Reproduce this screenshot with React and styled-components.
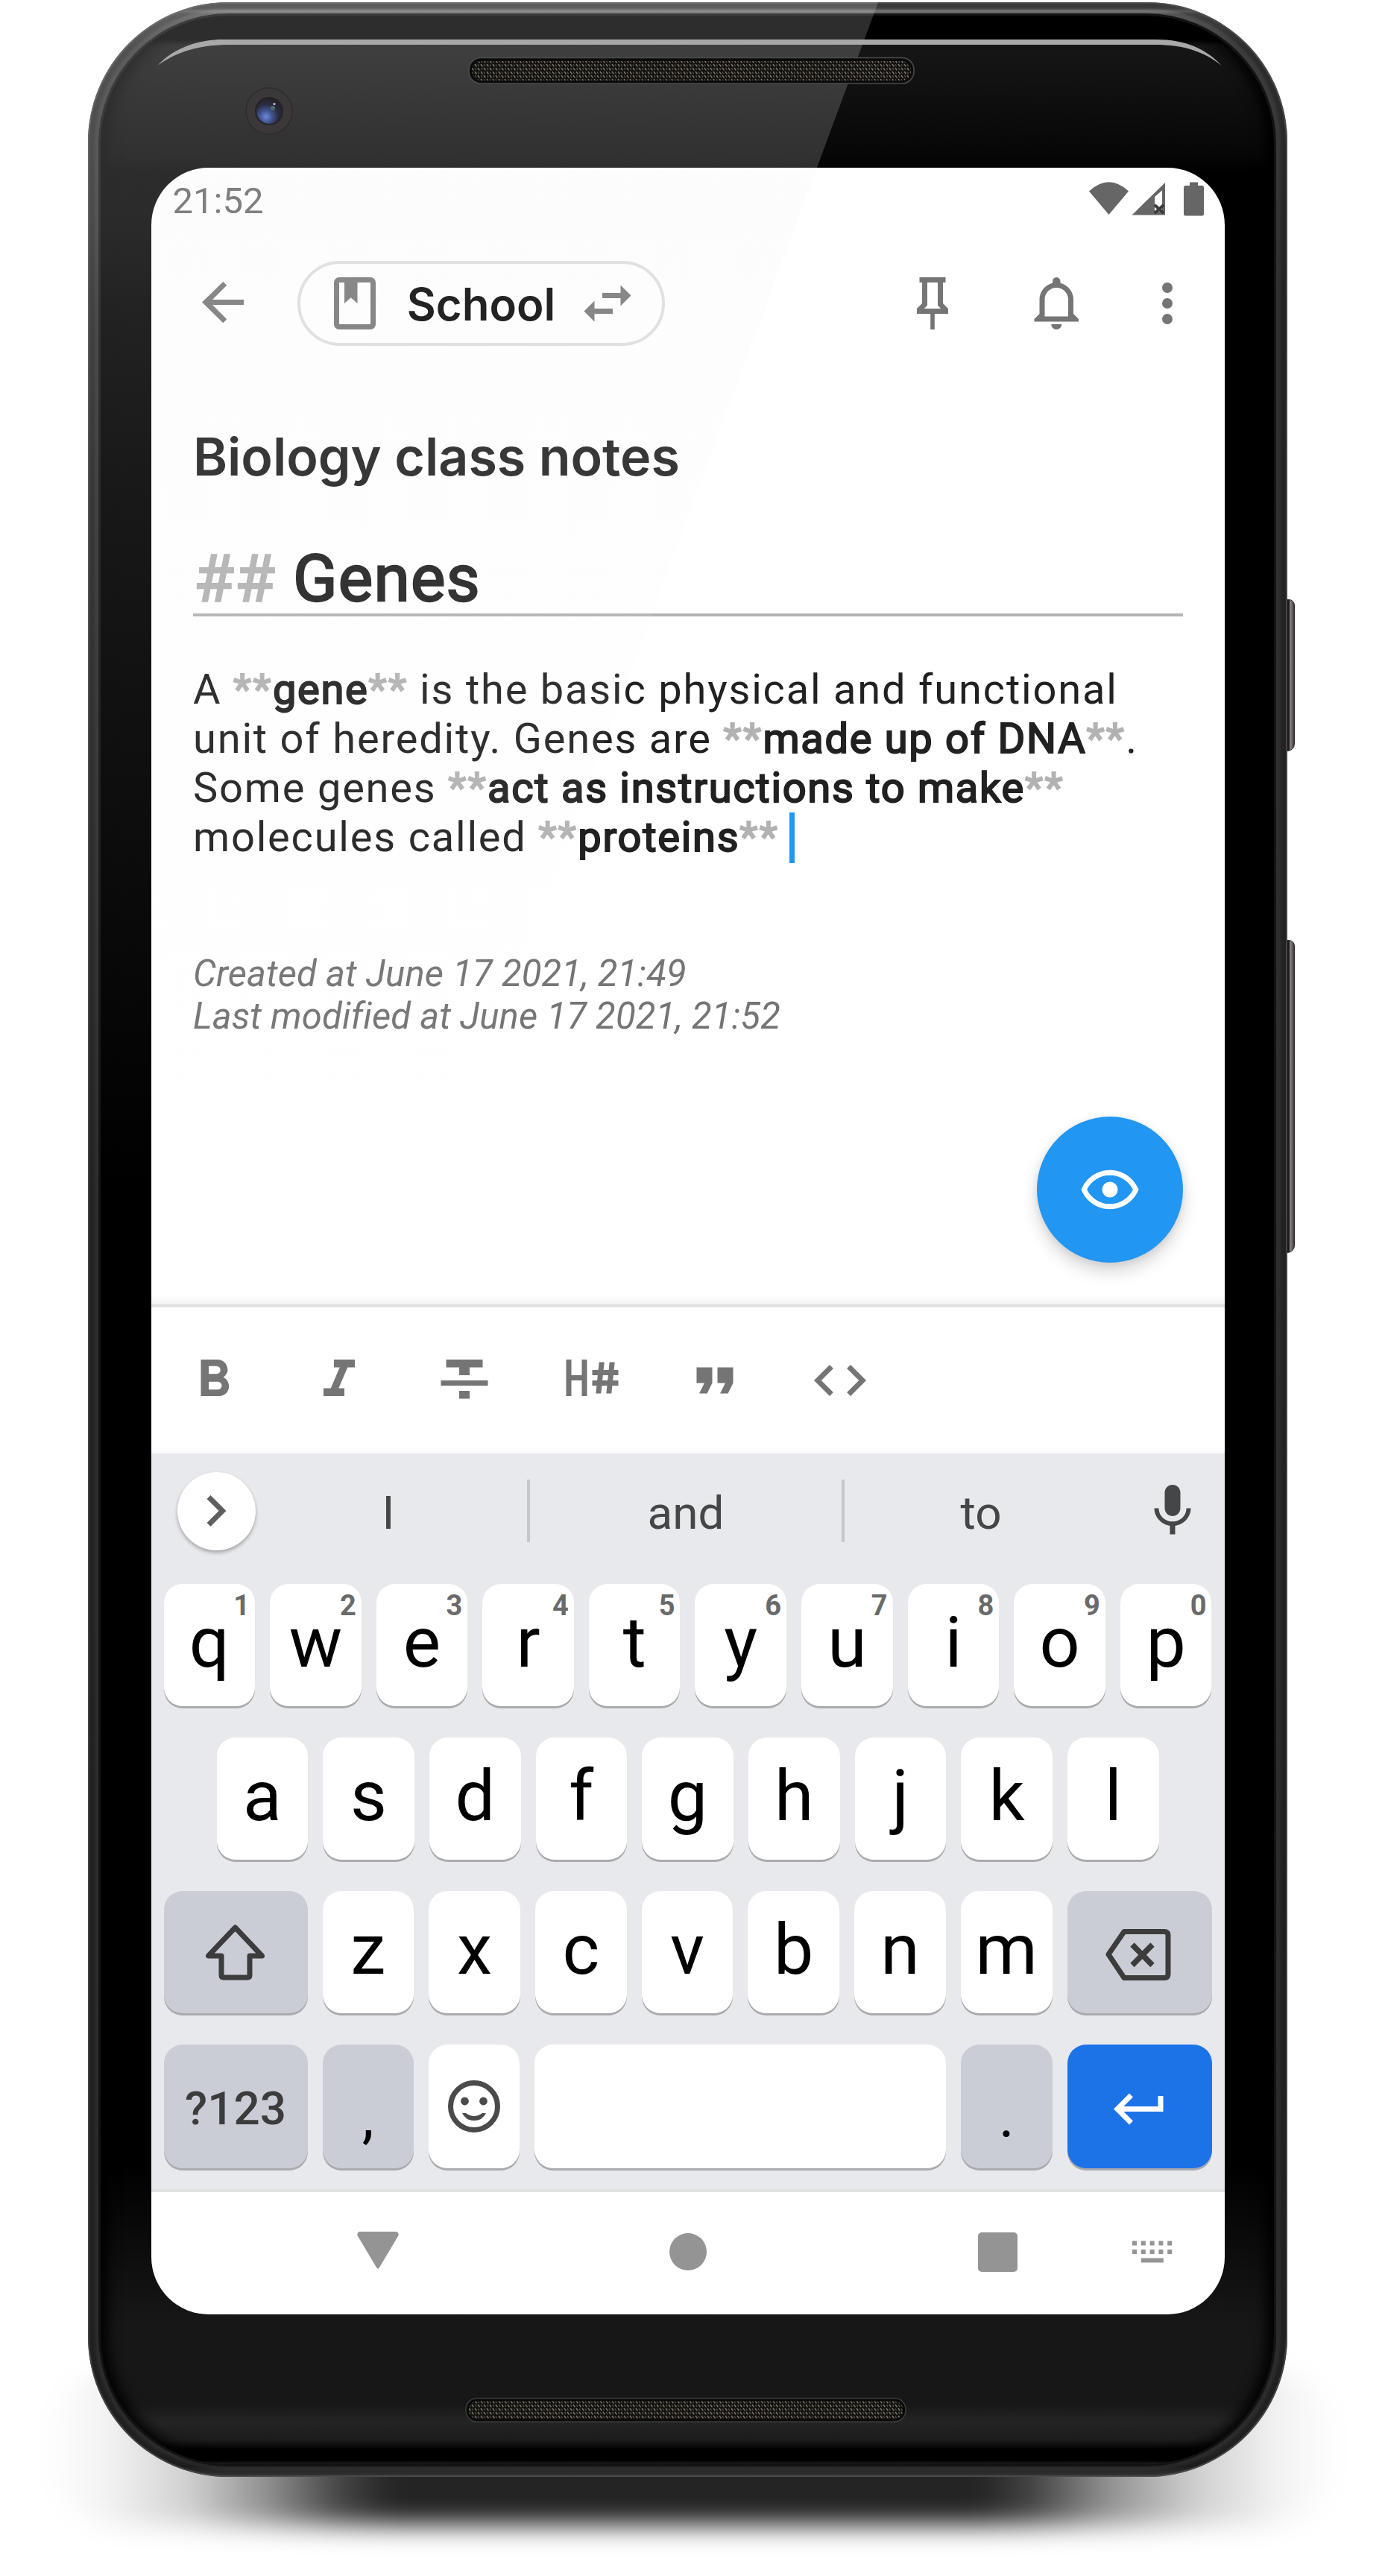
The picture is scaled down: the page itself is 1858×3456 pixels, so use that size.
import React from "react";
import styled, { createGlobalStyle, css } from "styled-components";

const GlobalStyle = createGlobalStyle`
  *, *::before, *::after { box-sizing: border-box; }
  body { margin: 0; background: #fff; font-family: Roboto, "Liberation Sans", sans-serif; }
`;

/* ---------- device ---------- */

const Page = styled.main`
  position: relative;
  width: 1858px;
  height: 3456px;
  padding: 3px 0 0 118px;
  overflow: hidden;
  background: #fff;
`;

const GroundShadow = styled.div`
  position: absolute;
  left: 60px;
  top: 3180px;
  width: 1740px;
  height: 208px;
  border-radius: 180px;
  filter: blur(17px);
  background: linear-gradient(
    90deg,
    rgba(0, 0, 0, 0) 0%,
    rgba(0, 0, 0, 0.05) 5%,
    rgba(0, 0, 0, 0.18) 11%,
    rgba(0, 0, 0, 0.43) 17%,
    rgba(0, 0, 0, 0.74) 23%,
    rgba(0, 0, 0, 0.86) 27%,
    rgba(0, 0, 0, 0.86) 72%,
    rgba(0, 0, 0, 0.74) 76%,
    rgba(0, 0, 0, 0.43) 82%,
    rgba(0, 0, 0, 0.18) 89%,
    rgba(0, 0, 0, 0.05) 95%,
    rgba(0, 0, 0, 0) 100%
  );
`;

const SideButton = styled.div`
  position: absolute;
  left: 1721px;
  top: ${(p) => p.$top}px;
  width: 16px;
  height: ${(p) => p.$height}px;
  border-radius: 0 8px 10px 0;
  border: 1.5px solid #2a2628;
  background: linear-gradient(90deg, #1c1a1b 0 50%, #8d8587 66%, #3b3638 100%);
`;

const Phone = styled.div`
  position: relative;
  width: 1609px;
  height: 3320px;
  padding: 18px 18px 17px 17px;
  border-radius: 188px;
  overflow: hidden;
  background: linear-gradient(
    180deg,
    #4a4a4a 0,
    #505050 8px,
    #767676 12px,
    #555 16px,
    #3c3c3c 60px,
    #303030 400px,
    #2b2b2b 3290px,
    #262626 3306px,
    #484848 3320px
  );
  box-shadow: inset 0 0 0 2px rgba(90, 90, 90, 0.6), inset 0 0 3px 9px rgba(0, 0, 0, 0.25);
`;

const Glass = styled.div`
  position: relative;
  width: 1574px;
  height: 3285px;
  padding: 204px 66px 201px 68px;
  border-radius: 172px;
  background: linear-gradient(
    180deg,
    #000 0,
    #000 32px,
    #161616 40px,
    #111 90px,
    #060606 190px,
    #000 210px,
    #000 2880px,
    #131313 3060px,
    #171717 3100px,
    #171717 3205px,
    #242424 3228px,
    #1c1c1c 3252px,
    #000 3266px,
    #000 3280px,
    #444 3284px
  );
  box-shadow: 0 0 0 3px #131313, inset 10px 0 18px rgba(0, 0, 0, 0.9), inset -10px 0 18px rgba(0, 0, 0, 0.9);
`;

const Screen = styled.div`
  width: 1440px;
  height: 2880px;
  border-radius: 77px;
  overflow: hidden;
  display: flex;
  flex-direction: column;
  background: #fff;
`;

/* Diagonal reflection that fades out towards the middle of the device. */
const Gloss = styled.div`
  position: absolute;
  inset: 0 auto auto 0;
  width: 1062px;
  height: 1620px;
  pointer-events: none;
  clip-path: polygon(0 0, 1060px 0, 461px 1620px, 0 1620px);
  background: linear-gradient(
    180deg,
    rgba(240, 240, 240, 0.19) 0,
    rgba(240, 240, 240, 0.18) 280px,
    rgba(240, 240, 240, 0.14) 420px,
    rgba(240, 240, 240, 0.1) 650px,
    rgba(240, 240, 240, 0.06) 1050px,
    rgba(240, 240, 240, 0) 1600px
  );
`;

const Hardware = styled.svg`
  position: absolute;
  left: 0;
  top: ${(p) => p.$top}px;
  width: 1858px;
  height: ${(p) => p.$height}px;
  pointer-events: none;
`;

/* ---------- icons ---------- */

const IconSvg = styled.svg`
  display: block;
  flex: none;
  width: ${(p) => p.$w || 84}px;
  height: ${(p) => p.$h || 84}px;
  fill: ${(p) => p.$color || "#757575"};
`;

const PATHS = {
  back: "M20,10.6V12.6H8L13.5,18.1L12.08,19.52L4,11.6L12.08,3.68L13.5,5.1L8,10.6H20Z",
  book: "M18,2A2,2 0 0,1 20,4V20A2,2 0 0,1 18,22H6A2,2 0 0,1 4,20V4A2,2 0 0,1 6,2H18M18,4H13V12L10.5,9.75L8,12V4H6V20H18V4Z",
  swap: "M21,9L17,5V8H10V10H17V13M7,11L3,15L7,19V16H14V14H7V11Z",
  pin: "M16,12V4H17V2H7V4H8V12L6,14V16H11.2V22H12.8V16H18V14L16,12M8.8,14L10,12.8V4H14V12.8L15.2,14H8.8Z",
  bell: "M16,17H7V10.5C7,8 9,6 11.5,6C14,6 16,8 16,10.5M18,16V10.5C18,7.43 15.86,4.86 13,4.18V3.5A1.5,1.5 0 0,0 11.5,2A1.5,1.5 0 0,0 10,3.5V4.18C7.13,4.86 5,7.43 5,10.5V16L3,18V19H20V18M11.5,22A2,2 0 0,0 13.5,20H9.5A2,2 0 0,0 11.5,22Z",
  dots: "M12,16A2,2 0 0,1 14,18A2,2 0 0,1 12,20A2,2 0 0,1 10,18A2,2 0 0,1 12,16M12,10A2,2 0 0,1 14,12A2,2 0 0,1 12,14A2,2 0 0,1 10,12A2,2 0 0,1 12,10M12,4A2,2 0 0,1 14,6A2,2 0 0,1 12,8A2,2 0 0,1 10,6A2,2 0 0,1 12,4Z",
  eye: "M12,9A3,3 0 0,1 15,12A3,3 0 0,1 12,15A3,3 0 0,1 9,12A3,3 0 0,1 12,9M12,4.5C17,4.5 21.27,7.61 23,12C21.27,16.39 17,19.5 12,19.5C7,19.5 2.73,16.39 1,12C2.73,7.61 7,4.5 12,4.5M3.18,12C4.83,15.36 8.24,17.5 12,17.5C15.76,17.5 19.17,15.36 20.82,12C19.17,8.64 15.76,6.5 12,6.5C8.24,6.5 4.83,8.64 3.18,12Z",
  bold: "M13.5,15.5H10V12.5H13.5A1.5,1.5 0 0,1 15,14A1.5,1.5 0 0,1 13.5,15.5M10,6.5H13A1.5,1.5 0 0,1 14.5,8A1.5,1.5 0 0,1 13,9.5H10M15.6,10.79C16.57,10.11 17.25,9 17.25,8C17.25,5.74 15.5,4 13.25,4H7V18H14.04C16.14,18 17.75,16.3 17.75,14.21C17.75,12.69 16.89,11.39 15.6,10.79Z",
  italic: "M10,4V7H12.21L8.79,15H6V18H14V15H11.79L15.21,7H18V4H10Z",
  strike: "M3,14H21V12H3M5,4V7H10V10H14V7H19V4M10,19H14V16H10V19Z",
  heading:
    "M3,4H5V10H9V4H11V18H9V12H5V18H3V4M13,8H15.31L15.63,5H17.63L17.31,8H19.31L19.63,5H21.63L21.31,8H23V10H21.1L20.9,12H23V14H20.69L20.37,17H18.37L18.69,14H16.69L16.37,17H14.37L14.69,14H13V12H14.9L15.1,10H13V8M17.1,10L16.9,12H18.9L19.1,10H17.1Z",
  quote: "M14,17H17L19,13V7H13V13H16M6,17H9L11,13V7H5V13H8L6,17Z",
  code: "M14.6,16.6L19.2,12L14.6,7.4L16,6L22,12L16,18L14.6,16.6M9.4,16.6L4.8,12L9.4,7.4L8,6L2,12L8,18L9.4,16.6Z",
  chevron: "M8.15,16.59L12.73,12L8.15,7.41L9.56,6l6,6-6,6L8.15,16.59Z",
  mic: "M12 14c1.66 0 2.99-1.34 2.99-3L15 5c0-1.66-1.34-3-3-3S9 3.34 9 5v6c0 1.66 1.34 3 3 3zm5.3-3c0 3-2.54 5.1-5.3 5.1S6.7 14 6.7 11H5c0 3.41 2.72 6.23 6 6.72V21h2v-3.28c3.28-.48 6-3.3 6-6.72h-1.7z",
  enter: "M19 8v4H5.83l3.58-3.59L8 7l-6 6 6 6 1.41-1.41L5.83 14H21V8h-2z",
};

const Icon = ({ name, color }) => (
  <IconSvg viewBox="0 0 24 24" $color={color}>
    <path d={PATHS[name]} />
  </IconSvg>
);

/* ---------- status bar ---------- */

const StatusBar = styled.div`
  height: 84px;
  padding: 0 26px 0 28.5px;
  display: flex;
  justify-content: space-between;
  align-items: flex-start;
`;

const Clock = styled.span`
  font-size: 49px;
  line-height: 58px;
  padding-top: 16px;
  color: #666;
`;

const StatusIcons = styled.div`
  display: flex;
  padding-top: 18px;
`;

/* ---------- app bar ---------- */

const AppBar = styled.header`
  height: 196px;
  padding: 0 35px 0 54px;
  display: flex;
  align-items: center;
`;

const NotebookChip = styled.div`
  width: 493px;
  height: 114px;
  margin-left: 58px;
  padding: 0 31px 0 31px;
  border: 4px solid #dedede;
  border-radius: 57px;
  display: flex;
  align-items: center;
  justify-content: space-between;
`;

const ChipLabel = styled.span`
  font-family: Inter, sans-serif;
  font-weight: 600;
  font-size: 60px;
  line-height: 72px;
  padding-top: 2px;
  color: #000;
`;

const Actions = styled.div`
  margin-left: auto;
  display: flex;
`;

const ActionGap = styled.span`
  width: ${(p) => p.$w}px;
`;

/* ---------- editor ---------- */

const Editor = styled.section`
  position: relative;
  flex: 1;
  padding: 66px 56px 0;
  box-shadow: inset 0 -14px 14px -12px rgba(0, 0, 0, 0.08);
`;

const NoteTitle = styled.h1`
  margin: 0;
  font-family: Inter, sans-serif;
  font-weight: 600;
  font-size: 70px;
  line-height: 84px;
  letter-spacing: -0.05px;
  color: #212121;
`;

const NoteHeading = styled.h2`
  margin: 74px 0 0;
  padding-left: 1px;
  font-weight: 400;
  font-size: 87.5px;
  line-height: 94px;
  border-bottom: 4px solid #b3b3b3;
  color: #212121;
  letter-spacing: 1.2px;
  -webkit-text-stroke: 2.4px currentColor;
`;

const Mark = styled.span`
  color: #b2b2b2;
`;

const Body = styled.div`
  margin-top: 65px;
  font-size: 56px;
  line-height: 66px;
  letter-spacing: 1.8px;
  color: #212121;
`;

const Line = styled.div`
  display: flex;
  white-space: pre;
`;

/* Emphasis keeps the regular letter widths and thickens the strokes. */
const Strong = styled.strong`
  font-weight: 400;
  letter-spacing: ${(p) => p.$spacing || 1.72}px;
  -webkit-text-stroke: 2px currentColor;
`;

const Caret = styled.span`
  width: 7px;
  height: 68px;
  margin-left: 14px;
  background: #2196f3;
`;

const Meta = styled.div`
  margin-top: 120px;
  font-style: italic;
  font-size: 49px;
  line-height: 57px;
  letter-spacing: 0.1px;
  color: #757575;
`;

const Fab = styled.button`
  position: absolute;
  right: 56px;
  bottom: 56px;
  width: 196px;
  height: 196px;
  padding: 0;
  border: 0;
  border-radius: 50%;
  display: grid;
  place-items: center;
  background: #2196f3;
  box-shadow: 0 12px 22px rgba(0, 0, 0, 0.16), 0 2px 10px rgba(0, 0, 0, 0.08);
`;

const FormatBar = styled.div`
  height: 200px;
  padding: 0 41.5px;
  border-top: 4px solid #e0e0e0;
  display: flex;
  align-items: center;
  gap: 84px;
  box-shadow: inset 0 -10px 10px -8px rgba(0, 0, 0, 0.04);
`;

/* ---------- keyboard ---------- */

const Keyboard = styled.div`
  height: 991px;
  background: #e8e9ed;
  border-bottom: 4px solid #e0e0e0;
`;

const Suggestions = styled.div`
  height: 154px;
  display: grid;
  grid-template-columns: 132px 372px 4px 418px 4px 366px 144px;
  align-items: center;
`;

const ExpandButton = styled.div`
  width: 105px;
  height: 105px;
  margin-left: 35px;
  border-radius: 50%;
  display: grid;
  place-items: center;
  background: #fff;
  box-shadow: 0 3px 5px rgba(0, 0, 0, 0.3);
`;

const Suggestion = styled.span`
  text-align: center;
  font-size: 62px;
  line-height: 74px;
  padding-top: 5px;
  color: #444648;
`;

const Divider = styled.span`
  height: 84px;
  background: #c4c6ca;
`;

const MicSlot = styled.span`
  padding-left: 32px;
`;

const KeyRows = styled.div`
  padding-top: 21px;
  display: flex;
  flex-direction: column;
  gap: 42px;
`;

const KeyRow = styled.div`
  display: flex;
  gap: 20px;
  height: ${(p) => p.$height || 164}px;
  padding: 0 ${(p) => (p.$inset || 17) + 0.5}px 0 ${(p) => (p.$inset || 17) - 0.5}px;
`;

const tones = {
  letter: css`background: #fff; color: #000;`,
  system: css`background: #cbcdd6; color: #3c3c3c;`,
  accent: css`background: #1c73e8; color: #fff;`,
};

const Key = styled.div`
  position: relative;
  flex: ${(p) => (p.$width ? `0 0 ${p.$width}px` : "1 1 0")};
  border-radius: 25px;
  display: flex;
  align-items: center;
  justify-content: center;
  box-shadow: 0 3px 0 #a9abad;
  ${(p) => tones[p.$tone || "letter"]}
`;

const Letter = styled.span`
  font-size: 95px;
  line-height: 111px;
  padding-bottom: 7px;
`;

const Hint = styled.span`
  position: absolute;
  top: 7px;
  right: 7px;
  font-size: 38px;
  line-height: 45px;
  font-weight: 700;
  color: #6a6a6a;
`;

const ModeLabel = styled.span`
  font-size: 62px;
  line-height: 72px;
  font-weight: 500;
  padding-top: 6px;
`;

const Punctuation = styled.span`
  font-size: 80px;
  line-height: 94px;
  padding-top: 27px;
  color: #000;
`;

/* ---------- system navigation ---------- */

const NavBar = styled.nav`
  height: 164px;
  padding: 0 0 4px 204px;
  display: grid;
  grid-template-columns: 200px 216px 200px 216px 198px 217px;
  justify-content: start;
  align-items: center;
`;

const NavCell = styled.span`
  display: grid;
  place-items: center;
  padding-bottom: ${(p) => p.$lift || 0}px;
`;

const letters1 = "qwertyuiop".split("");
const letters2 = "asdfghjkl".split("");
const letters3 = "zxcvbnm".split("");

const TopHardware = () => (
  <Hardware viewBox="0 0 1858 225" $top={0} $height={225}>
    <defs>
      <pattern id="mesh" width="8" height="10" patternUnits="userSpaceOnUse">
        <rect width="8" height="10" fill="#12110e" />
        <path d="M1 1l2.4 3.4M5 6l2.4 3.4" stroke="#7f776d" strokeWidth="1.5" />
        <path d="M5.4 1.2l1.6 2.6M1 6.4l1.6 2.6" stroke="#544e48" strokeWidth="1.4" />
      </pattern>
      <radialGradient id="lens" cx="0.38" cy="0.72" r="0.75">
        <stop offset="0" stopColor="#6f8bdc" />
        <stop offset="0.3" stopColor="#445796" />
        <stop offset="0.65" stopColor="#2a2b40" />
        <stop offset="1" stopColor="#232229" />
      </radialGradient>
    </defs>
    <path d="M211 88C232 66 262 53 300 53H1550C1592 53 1618 66 1639 88C1616 70 1590 60 1548 60H304C264 61 236 70 211 88Z" fill="#a9a9a9" />
    <rect x="629" y="77.5" width="597" height="34.5" rx="16" fill="#0b0b0b" stroke="#4c4c4a" strokeWidth="1.6" />
    <rect x="633" y="82" width="589" height="26" rx="12" fill="url(#mesh)" />
    <circle cx="361" cy="149" r="31" fill="#3c3839" stroke="#2d2c2d" strokeWidth="1.5" />
    <circle cx="361" cy="149" r="19" fill="#232226" />
    <circle cx="361" cy="149" r="17" fill="url(#lens)" />
    <circle cx="366" cy="145" r="3" fill="#4b6b74" />
    <circle cx="368" cy="139.500" r="1.600" fill="#d9b8cf" />
  </Hardware>
);

const BottomHardware = () => (
  <Hardware viewBox="0 0 1858 60" $top={3205} $height={60}>
    <rect x="625" y="12.500" width="590" height="31.500" rx="15" fill="#0a0a0a" stroke="#3b3b39" strokeWidth="1.500" />
    <rect x="629" y="16.500" width="582" height="24" rx="11" fill="url(#mesh)" />
  </Hardware>
);

const Stars = () => (
  <Mark>
    <Strong $spacing={2.3}>**</Strong>
  </Mark>
);

export default function App() {
  return (
    <Page>
      <GlobalStyle />
      <GroundShadow />
      <SideButton $top={804} $height={204} />
      <SideButton $top={1261} $height={420} />
      <Phone>
        <Glass>
          <Screen>
            <StatusBar>
              <Clock>21:52</Clock>
              <StatusIcons>
                <IconSvg viewBox="1457 243 160 48" $w={160} $h={48} $color="#666">
                  <path d="M1461 256.500Q1487.500 232 1514 256.500L1487.500 288Z" />
                  <path fillRule="evenodd" d="M1518.500 288.500L1563 245V288.500ZM1549 264V284H1559V255.500Z" />
                  <path d="M1549 275l12 11M1561 275l-12 11" stroke="#3a3a3a" strokeWidth="4" />
                  <path d="M1596 244.500H1607V249H1612.500Q1615 249 1615 251.500V287Q1615 289.500 1612.500 289.500H1590.500Q1588 289.500 1588 287V251.500Q1588 249 1590.500 249H1596Z" />
                </IconSvg>
              </StatusIcons>
            </StatusBar>

            <AppBar>
              <Icon name="back" />
              <NotebookChip>
                <Icon name="book" />
                <ChipLabel>School</ChipLabel>
                <Icon name="swap" />
              </NotebookChip>
              <Actions>
                <Icon name="pin" />
                <ActionGap $w={84} />
                <Icon name="bell" />
                <ActionGap $w={63} />
                <Icon name="dots" />
              </Actions>
            </AppBar>

            <Editor>
              <NoteTitle>Biology class notes</NoteTitle>
              <NoteHeading>
                <Mark>##</Mark> Genes
              </NoteHeading>
              <Body>
                <Line>
                  A <Stars />
                  <Strong>gene</Strong>
                  <Stars /> is the basic physical and functional
                </Line>
                <Line>
                  unit of heredity. Genes are <Stars />
                  <Strong>made up of DNA</Strong>
                  <Stars />.
                </Line>
                <Line>
                  Some genes <Stars />
                  <Strong>act as instructions to make</Strong>
                  <Stars />
                </Line>
                <Line>
                  molecules called <Stars />
                  <Strong>proteins</Strong>
                  <Stars />
                  <Caret />
                </Line>
              </Body>
              <Meta>
                Created at June 17 2021, 21:49
                <br />
                Last modified at June 17 2021, 21:52
              </Meta>
              <Fab>
                <Icon name="eye" color="#fff" />
              </Fab>
            </Editor>

            <FormatBar>
              {["bold", "italic", "strike", "heading", "quote", "code"].map((name) => (
                <Icon key={name} name={name} />
              ))}
            </FormatBar>

            <Keyboard>
              <Suggestions>
                <ExpandButton>
                  <Icon name="chevron" color="#5f5f5f" />
                </ExpandButton>
                <Suggestion>I</Suggestion>
                <Divider />
                <Suggestion>and</Suggestion>
                <Divider />
                <Suggestion>to</Suggestion>
                <MicSlot>
                  <Icon name="mic" color="#444648" />
                </MicSlot>
              </Suggestions>
              <KeyRows>
                <KeyRow>
                  {letters1.map((l, i) => (
                    <Key key={l}>
                      <Letter>{l}</Letter>
                      <Hint>{(i + 1) % 10}</Hint>
                    </Key>
                  ))}
                </KeyRow>
                <KeyRow $inset={88}>
                  {letters2.map((l) => (
                    <Key key={l}>
                      <Letter>{l}</Letter>
                    </Key>
                  ))}
                </KeyRow>
                <KeyRow>
                  <Key $tone="system" $width={193}>
                    <IconSvg viewBox="276 2577 80 84" $w={80} $h={84} $color="none">
                      <path
                        d="M315.500 2586L279.500 2624H297V2650Q297 2653 300 2653H332Q335 2653 335 2650V2624H351.500Z"
                        stroke="#3c3c3c"
                        strokeWidth="7"
                        strokeLinejoin="round"
                      />
                    </IconSvg>
                  </Key>
                  {letters3.map((l) => (
                    <Key key={l}>
                      <Letter>{l}</Letter>
                    </Key>
                  ))}
                  <Key $tone="system" $width={194}>
                    <IconSvg viewBox="1483 2580 92 78" $w={92} $h={78} $color="none">
                      <path
                        d="M1487 2622L1508 2591.500H1562Q1567 2591.500 1567 2596.500V2648.500Q1567 2653.500 1562 2653.500H1508Z"
                        stroke="#3c3c3c"
                        strokeWidth="7"
                        strokeLinejoin="round"
                      />
                      <path d="M1519 2609L1546 2636.500M1546 2609L1519 2636.500" stroke="#3c3c3c" strokeWidth="7.500" />
                    </IconSvg>
                  </Key>
                </KeyRow>
                <KeyRow $height={166}>
                  <Key $tone="system" $width={193}>
                    <ModeLabel>?123</ModeLabel>
                  </Key>
                  <Key $tone="system" $width={122.3}>
                    <Punctuation>,</Punctuation>
                  </Key>
                  <Key $width={122.3}>
                    <IconSvg viewBox="0 0 72 72" $w={72} $h={72} $color="#4a4a4a">
                      <circle cx="36" cy="36" r="31.500" fill="none" stroke="#4a4a4a" strokeWidth="7" />
                      <circle cx="23.500" cy="29" r="5.400" />
                      <circle cx="48.500" cy="29" r="5.400" />
                      <path d="M20 45H25Q36 53 47 45H52Q47 55 36 55T20 45Z" />
                    </IconSvg>
                  </Key>
                  <Key />
                  <Key $tone="system" $width={122.3}>
                    <Punctuation>.</Punctuation>
                  </Key>
                  <Key $tone="accent" $width={194}>
                    <Icon name="enter" color="#fff" />
                  </Key>
                </KeyRow>
              </KeyRows>
            </Keyboard>

            <NavBar>
              <NavCell $lift={5}>
                <IconSvg viewBox="0 0 56 50" $w={56} $h={50} $color="#949494">
                  <path d="M3 0H53Q57 2 55 6L30 48Q28 51 26 48L1 6Q-1 2 3 0Z" />
                </IconSvg>
              </NavCell>
              <span />
              <NavCell>
                <IconSvg viewBox="0 0 50 50" $w={50} $h={50} $color="#949494">
                  <circle cx="25" cy="25" r="25" />
                </IconSvg>
              </NavCell>
              <span />
              <NavCell>
                <IconSvg viewBox="0 0 53 53" $w={53} $h={53} $color="#949494">
                  <rect width="53" height="53" rx="5" />
                </IconSvg>
              </NavCell>
              <NavCell>
                <IconSvg viewBox="0 0 54 30" $w={54} $h={30} $color="#949494">
                  {[0, 11.8, 23.6, 35.4, 47.2].map((x) => (
                    <React.Fragment key={x}>
                      <rect x={x} y="0.500" width="6" height="6" />
                      <rect x={x} y="12" width="6" height="6" />
                    </React.Fragment>
                  ))}
                  <rect x="11.800" y="23.500" width="30" height="6" />
                </IconSvg>
              </NavCell>
            </NavBar>
          </Screen>
        </Glass>
        <Gloss />
      </Phone>
      <TopHardware />
      <BottomHardware />
    </Page>
  );
}
